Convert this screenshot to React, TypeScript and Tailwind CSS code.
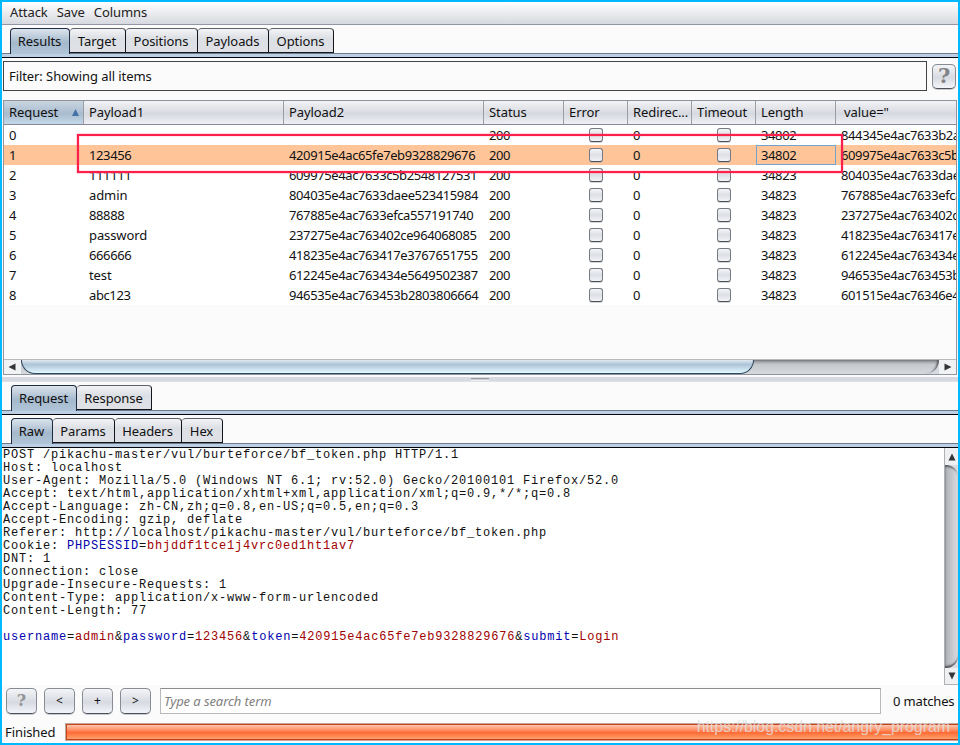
import { clsx } from "clsx";

const COLUMNS = [
  { label: "Request", width: "w-20" },
  { label: "Payload1", width: "w-[200px]" },
  { label: "Payload2", width: "w-[200px]" },
  { label: "Status", width: "w-20" },
  { label: "Error", width: "w-16" },
  { label: "Redirec...", width: "w-16" },
  { label: "Timeout", width: "w-16" },
  { label: "Length", width: "w-20" },
  { label: 'value="', width: "flex-1" },
];

const ROWS = [
  { payload1: "", payload2: "", length: "34802", value: "844345e4ac7633b2a" },
  { payload1: "123456", payload2: "420915e4ac65fe7eb9328829676", length: "34802", value: "609975e4ac7633c5b" },
  { payload1: "111111", payload2: "609975e4ac7633c5b2548127531", length: "34823", value: "804035e4ac7633dae" },
  { payload1: "admin", payload2: "804035e4ac7633daee523415984", length: "34823", value: "767885e4ac7633efca" },
  { payload1: "88888", payload2: "767885e4ac7633efca557191740", length: "34823", value: "237275e4ac763402c" },
  { payload1: "password", payload2: "237275e4ac763402ce964068085", length: "34823", value: "418235e4ac763417e" },
  { payload1: "666666", payload2: "418235e4ac763417e3767651755", length: "34823", value: "612245e4ac763434e" },
  { payload1: "test", payload2: "612245e4ac763434e5649502387", length: "34823", value: "946535e4ac763453b" },
  { payload1: "abc123", payload2: "946535e4ac763453b2803806664", length: "34823", value: "601515e4ac76346e4" },
];

const HEADERS = [
  "POST /pikachu-master/vul/burteforce/bf_token.php HTTP/1.1",
  "Host: localhost",
  "User-Agent: Mozilla/5.0 (Windows NT 6.1; rv:52.0) Gecko/20100101 Firefox/52.0",
  "Accept: text/html,application/xhtml+xml,application/xml;q=0.9,*/*;q=0.8",
  "Accept-Language: zh-CN,zh;q=0.8,en-US;q=0.5,en;q=0.3",
  "Accept-Encoding: gzip, deflate",
  "Referer: http://localhost/pikachu-master/vul/burteforce/bf_token.php",
];

const HEADERS_AFTER_COOKIE = [
  "DNT: 1",
  "Connection: close",
  "Upgrade-Insecure-Requests: 1",
  "Content-Type: application/x-www-form-urlencoded",
  "Content-Length: 77",
];

const BODY = [
  ["username", "admin"],
  ["password", "123456"],
  ["token", "420915e4ac65fe7eb9328829676"],
  ["submit", "Login"],
];

type Tab = { label: string; width: string };

function Tabs({ tabs, className }: { tabs: Tab[]; className?: string }) {
  return (
    <div className={clsx("flex h-[25px] shrink-0 box-content", className)}>
      {tabs.map((tab, index) => (
        <div
          key={tab.label}
          className={clsx(
            "flex items-center justify-center border-t border-r rounded-t-[4px] pr-px",
            tab.width,
            index === 0
              ? "z-10 h-[26px] border-l border-[#1d2c40] bg-linear-to-b from-[#dce4ec] via-[#a5b9cd] via-55% to-[#b0c5d8] pb-0.5"
              : "h-[25px] border-b border-t-[#5d6068] border-r-[#14151c] border-b-[#14151c] bg-linear-to-b from-[#f3f4f6] via-[#dcdfe4] via-40% to-[#dfe1e6] pt-px"
          )}
        >
          {tab.label}
        </div>
      ))}
    </div>
  );
}

function TabStrip() {
  return (
    <div className="h-[5px] shrink-0 border-t border-b border-t-[#6b7a8e] border-b-[#05060d] bg-[#bccfe3]" />
  );
}

function Checkbox() {
  return (
    <span className="block size-[14px] rounded-[3px] border border-[#777a82] border-b-[#4b5059] bg-linear-to-b from-[#f4f5f7] via-[#dcdfe5] to-[#f2f3f7] shadow-[0_1px_0_#a8abb180]" />
  );
}

function Button({ children, className }: { children: string; className: string }) {
  return (
    <div
      className={clsx(
        "flex shrink-0 items-center justify-center rounded-[5px] border border-[#878b93] border-b-[#4c5159] bg-linear-to-b from-[#f4f5f7] via-[#d7dae1] via-55% to-[#f3f4fa] shadow-[0_1px_0_#c9cbd0]",
        className
      )}
    >
      {children}
    </div>
  );
}

function Arrow({ points }: { points: string }) {
  return (
    <svg width="8" height="8" viewBox="0 0 8 8">
      <polygon points={points} fill="#343537" />
    </svg>
  );
}

function ResultsTable() {
  return (
    <div className="mx-px mt-[9px] flex h-[275px] shrink-0 flex-col border border-[#8f939d]">
      <div className="flex h-6 shrink-0 border-b border-[#858a94]">
        {COLUMNS.map((column, index) => (
          <div
            key={column.label}
            className={clsx(
              "flex shrink-0 items-center justify-between overflow-hidden whitespace-pre pb-px pr-1",
              column.width,
              index < 8 ? "border-r border-[#9a9da5] pl-[5px]" : "pl-2",
              index === 0
                ? "bg-linear-to-b from-[#cad6e1] via-[#a9bccf] via-55% to-[#c3d9e8]"
                : "bg-linear-to-b from-[#f2f3f5] via-[#d6d9e0] via-55% to-[#eff0f5]"
            )}
          >
            {column.label}
            {index === 0 && (
              <svg width="7" height="7" viewBox="0 0 7 7">
                <polygon points="3.5,0 7,7 0,7" fill="#4273a8" />
              </svg>
            )}
          </div>
        ))}
      </div>

      <div className="h-[180px] shrink-0 bg-white tracking-[-0.39px]">
        {ROWS.map((row, index) => (
          <div key={index} className={clsx("flex h-5 items-center", index === 1 && "bg-[#ffc599]")}>
            <div className="w-20 pl-[5px]">{index}</div>
            <div className={clsx("w-[200px] pl-[5px]", /^[a-z]+$/.test(row.payload1) && "tracking-[-0.1px]")}>
              {row.payload1}
            </div>
            <div className="w-[200px] pl-[5px]">{row.payload2}</div>
            <div className="w-20 pl-[5px]">200</div>
            <div className="flex w-16 justify-center"><Checkbox /></div>
            <div className="w-16 pl-[5px]">0</div>
            <div className="flex w-16 justify-center"><Checkbox /></div>
            <div className={clsx("h-5 w-20 border pl-1", index === 1 ? "border-[#74a2cf]" : "border-transparent")}>
              {row.length}
            </div>
            <div className="w-0 flex-1 overflow-hidden whitespace-nowrap pl-[5px]">{row.value}</div>
          </div>
        ))}
      </div>

      <div className="flex-1" />

      <div className="flex h-[15px] shrink-0 border-t border-[#b9bbc0]">
        <div className="flex w-[17px] items-center justify-center bg-[#f1f2f4] pr-px">
          <Arrow points="7.5,0.5 0.5,4 7.5,7.5" />
        </div>
        <div className="flex-1 bg-[#d6d9de]">
          <div className="h-[14px] rounded-br-[14px] bg-linear-to-b from-[#85888d] via-[#c4c7cc] via-30% to-[#d6d9de] shadow-[inset_-3px_1px_2px_-1px_#5b5d61]">
            <div className="h-[14px] w-[733px] rounded-b-[14px] border border-t-0 border-[#2f465e] bg-linear-to-b from-[#e2e9f0] via-[#adc3d8] via-35% to-[#e3faff]" />
          </div>
        </div>
        <div className="flex w-[17px] items-center justify-center bg-[#f1f2f4]">
          <Arrow points="0.5,0.5 7.5,4 0.5,7.5" />
        </div>
      </div>
    </div>
  );
}

function RawRequest() {
  return (
    <div className="flex h-[237px] shrink-0 bg-white">
      <pre className="flex-1 pl-px pt-px font-['Courier_10_Pitch','Liberation_Mono',monospace] text-[12px] leading-[13px] tracking-[0.8px] text-[#111]">
        {HEADERS.map((line) => (
          <div key={line}>{line}</div>
        ))}
        <div>
          Cookie: <span className="text-[#0000b0]">PHPSESSID</span>=
          <span className="text-[#a00000]">bhjddf1tce1j4vrc0ed1ht1av7</span>
        </div>
        {HEADERS_AFTER_COOKIE.map((line) => (
          <div key={line}>{line}</div>
        ))}
        <div className="mt-[13px]">
          {BODY.map(([name, value], index) => (
            <span key={name}>
              {index > 0 && "&"}
              <span className="text-[#0000b0]">{name}</span>=<span className="text-[#a00000]">{value}</span>
            </span>
          ))}
        </div>
      </pre>
      <div className="flex w-[14px] flex-col border-l border-[#aeb0b4]">
        <div className="flex h-[17px] items-center justify-center bg-[#eff0f2]">
          <Arrow points="4,0.5 7.5,7.5 0.5,7.5" />
        </div>
        <div className="flex flex-1 bg-[#d9dbe1]">
          <div className="flex-1 rounded-r-[12px] bg-linear-to-r from-[#aeb1b6] to-[#d9dbe1] shadow-[inset_1px_3px_2px_-1px_#5b5d61,inset_0_-3px_2px_-1px_#4f5256]" />
        </div>
        <div className="flex h-[17px] items-center justify-center border-b border-[#aeb0b4] bg-[#eff0f2]">
          <Arrow points="0.5,0.5 7.5,0.5 4,7.5" />
        </div>
      </div>
    </div>
  );
}

export default function App() {
  return (
    <div className="relative flex h-[745px] w-[960px] flex-col overflow-hidden border-2 border-[#00b9ff] bg-[#fbfbfb] font-['Noto_Sans',sans-serif] text-[13px] leading-[18px] tracking-[-0.08px] text-[#111]">
      <div className="flex h-[23px] shrink-0 gap-[9px] border-b border-[#9196a3] bg-linear-to-b from-white to-[#d6d9df] pl-2 pt-px text-[#222]">
        <span>Attack</span>
        <span>Save</span>
        <span>Columns</span>
      </div>

      <Tabs
        className="pl-2 pt-[3px]"
        tabs={[
          { label: "Results", width: "w-[60px]" },
          { label: "Target", width: "w-14" },
          { label: "Positions", width: "w-[72px]" },
          { label: "Payloads", width: "w-[71px]" },
          { label: "Options", width: "w-[65px]" },
        ]}
      />
      <TabStrip />

      <div className="mt-[3px] flex h-[30px] shrink-0 items-center gap-[5px] pl-px">
        <div className="flex h-[30px] w-[924px] items-center border border-[#444] pl-[5px]">
          Filter: Showing all items
        </div>
        <Button className="h-[25px] w-6 font-['DejaVu_Serif',serif] text-[21px] font-bold text-[#818387]">?</Button>
      </div>

      <ResultsTable />

      <div className="mt-0.5 flex h-[5px] shrink-0 items-start justify-center border-b border-[#dfe1e5] bg-[#d6d9df] pt-px">
        <div className="h-[3px] w-[18px] border-t border-b border-t-[#9a9da6] border-b-[#f0f1f3] bg-[#c9ccd3]" />
      </div>

      <Tabs
        className="pl-[9px] pt-[3px]"
        tabs={[
          { label: "Request", width: "w-[66px]" },
          { label: "Response", width: "w-[75px]" },
        ]}
      />
      <TabStrip />
      <Tabs
        className="pl-[9px] pt-[3px]"
        tabs={[
          { label: "Raw", width: "w-[42px]" },
          { label: "Params", width: "w-[62px]" },
          { label: "Headers", width: "w-[67px]" },
          { label: "Hex", width: "w-[41px]" },
        ]}
      />
      <TabStrip />

      <RawRequest />

      <div className="flex h-[32px] shrink-0 gap-[7px] pl-1 pt-[3px]">
        <Button className="h-[26px] w-[31px] font-['DejaVu_Serif',serif] text-[16px] font-bold text-[#919397]">?</Button>
        <Button className="h-[26px] w-[31px] text-xs">&lt;</Button>
        <Button className="h-[26px] w-[31px] text-xs">+</Button>
        <Button className="h-[26px] w-[31px] text-xs">&gt;</Button>
        <div className="ml-0.5 flex h-[26px] w-[721px] shrink-0 items-center border border-[#b7b9bc] border-t-[#8b8d91] bg-white pl-[3px] italic text-[#808080]">
          Type a search term
        </div>
        <div className="ml-[5px] flex h-[26px] items-center whitespace-nowrap tracking-[-0.15px]">0 matches</div>
      </div>

      <div className="flex h-[26px] shrink-0 items-center pl-[3px] pt-1">
        <div className="w-[60px]">Finished</div>
        <div className="h-[18px] flex-1 border border-r-0 border-[#c0aaa0]">
          <div className="h-4 border border-r-0 border-[#c8401c] bg-linear-to-b from-[#ffc5ad] via-[#ff6b33] via-55% to-[#ffa06c]" />
        </div>
      </div>

      {/* highlight drawn over the second result */}
      <div className="absolute left-[75px] top-[132px] h-[39px] w-[766px] border-2 border-[#ff1f4b] shadow-[0_0_1px_#ff1f4b,inset_0_0_1px_#ff1f4b]" />
      <div className="absolute bottom-[7px] right-[8px] whitespace-nowrap font-['Liberation_Sans',sans-serif] text-[16px] text-[#dfdfdf]/80">
        https://blog.csdn.net/angry_program
      </div>
    </div>
  );
}
